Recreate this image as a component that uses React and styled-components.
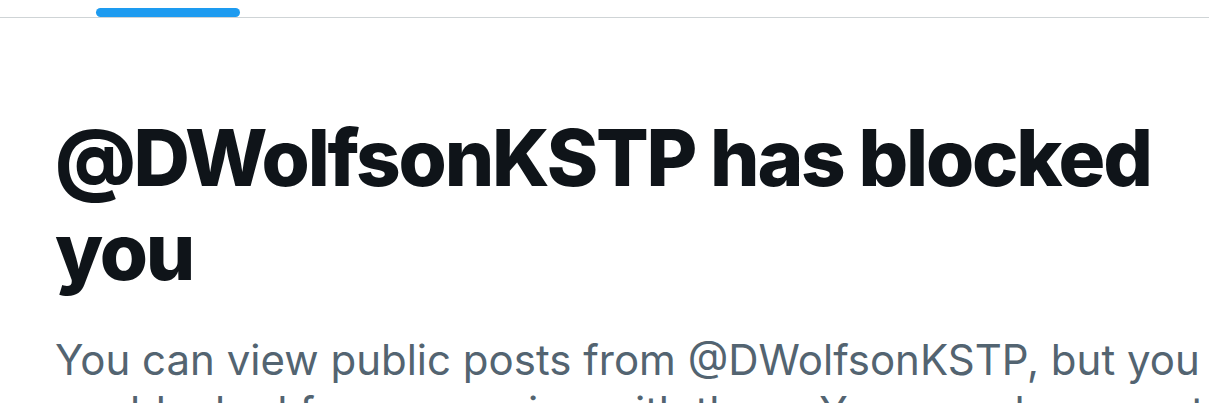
import styled, { createGlobalStyle } from 'styled-components';

const GlobalStyle = createGlobalStyle`
  html, body {
    margin: 0;
    padding: 0;
    background: #ffffff;
    overflow: hidden;
  }
  body {
    font-family: Inter, "Noto Sans", "Liberation Sans", sans-serif;
    -webkit-font-smoothing: antialiased;
  }
`;

const Page = styled.div`
  width: 1209px;
  height: 403px;
  overflow: hidden;
  background: #ffffff;
`;

const TabBar = styled.nav`
  display: flex;
  height: 17px;
  border-bottom: 1px solid #cfd4d6;
`;

const Tab = styled.div`
  display: flex;
  align-items: flex-end;
  margin-left: 96px;
  width: 144px;
`;

const Indicator = styled.div`
  width: 100%;
  height: 9px;
  border-radius: 5px;
  background: #1d9bf0;
`;

const Content = styled.section`
  padding: 0 0 0 55px;
`;

const Heading = styled.h1`
  margin: 93px 0 0;
  font-size: 78px;
  line-height: 94px;
  font-weight: 800;
  letter-spacing: -2.2px;
  color: #0f1419;
`;

const Body = styled.p`
  margin: 35px 0 0;
  font-size: 42px;
  line-height: 52px;
  font-weight: 400;
  color: #536471;
`;

export default function App() {
  return (
    <Page>
      <GlobalStyle />
      <TabBar>
        <Tab>
          <Indicator />
        </Tab>
      </TabBar>
      <Content>
        <Heading>@DWolfsonKSTP has blocked you</Heading>
        <Body>
          You can view public posts from @DWolfsonKSTP, but you are blocked from
          engaging with them. You can also report them.
        </Body>
      </Content>
    </Page>
  );
}
